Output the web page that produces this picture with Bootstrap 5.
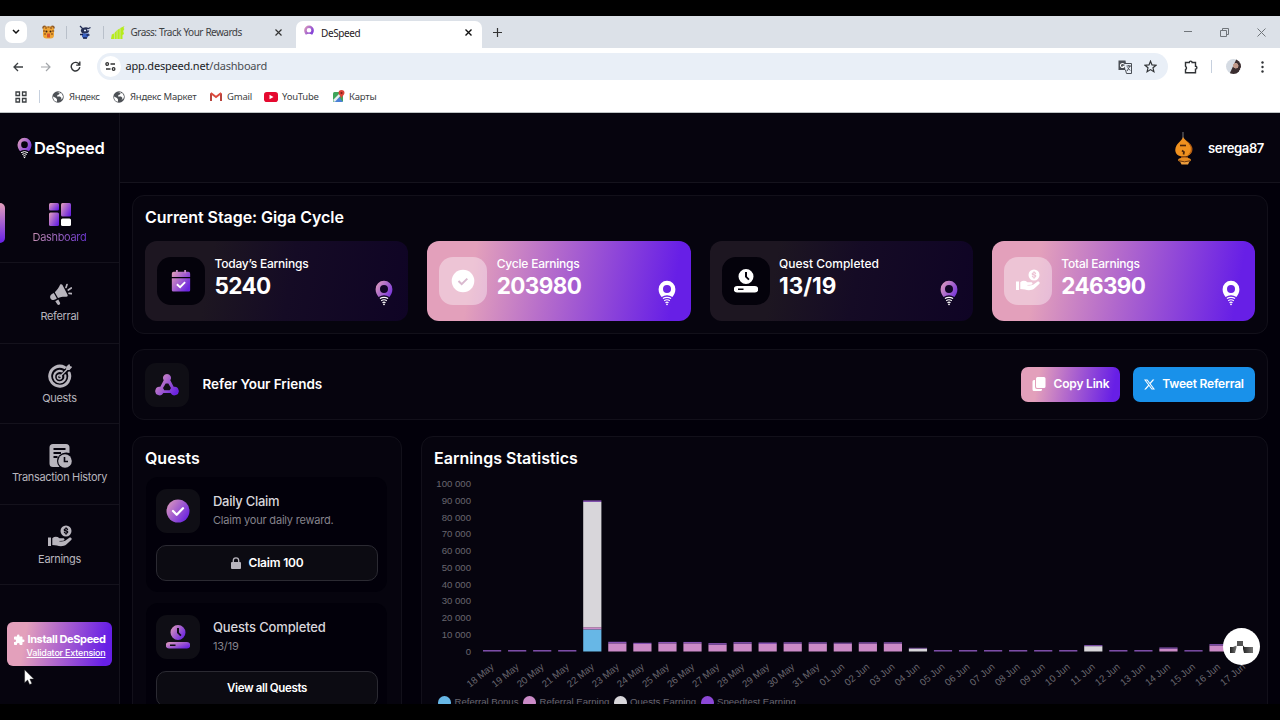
<!DOCTYPE html>
<html lang="en">
<head>
<meta charset="utf-8">
<title>DeSpeed</title>
<link href="https://cdn.jsdelivr.net/npm/bootstrap@5.3.0/dist/css/bootstrap.min.css" rel="stylesheet">
<style>
:root{--grad:linear-gradient(100deg,#e3a0bb 18%,#b56ccb 46%,#671fe6 92%)}
body{width:1280px;height:720px;overflow:hidden;background:#000;font-family:Inter,"Liberation Sans",sans-serif;font-size:12px;line-height:16px;color:#fff}
svg{display:block;flex:none}
span,a,h1,h2{white-space:nowrap}
.frame{height:688px;margin-top:16px;overflow:hidden;position:relative}
/* browser chrome */
.chrome{height:97px;background:#fff;color:#3c4043;font-family:"Noto Sans",sans-serif;font-size:10px;border-bottom:1px solid #bfc5c6}
.tabstrip{height:32px;background:#dce1e8;display:grid;grid-template-columns:32px 32px 4px 34px 4px 24px 136px 24px 6px 186px 30px 1fr 36px 37px 37px;align-items:center}
.tabstrip>*{justify-self:center}
.tabsearch{width:22px;height:22px;background:#fff;border-radius:7px}
.vline{width:1px;height:13px;background:#b9c0ca}
.tabnow{width:186px;height:27px;align-self:end;background:#fff;border-radius:7px 7px 0 0;color:#1f2023;padding:0 8px 4px 7px}
.toolbar{height:37px;display:grid;grid-template-columns:28px 28px 30px 1fr 44px 44px 12px;padding-left:4px;padding-right:12px;align-items:center}
.toolbar>*{justify-self:center}
.omni{justify-self:stretch!important;margin-left:7px;height:27px;border-radius:14px;background:#e9eff7;font-size:11px;letter-spacing:-.2px;color:#4a4d52;padding:0 11px 0 3px}
.omni b{font-weight:400;color:#202124}
.tune{width:21px;height:21px;border-radius:50%;background:#fff}
.marks{height:23px;display:grid;grid-template-columns:39px 13px 17px 44px 17px 80px 17px 37px 18px 50px 17px 1fr;align-items:center;font-size:9.5px}
.ph{width:15px;height:15px;border-radius:50%;background:radial-gradient(circle at 65% 45%,#c0998a 0 2.500px,transparent 3px),linear-gradient(115deg,#d5dbe3 45%,#3a2d2f 50% 85%,#b9b5bb 86%)}
/* application */
.app{height:591px;background:#02000a}
.side{width:120px;background:#06040e;border-right:1px solid #15131d}
.brandrow{height:70px;padding:0 0 0 17px}
.brandrow span{font-weight:600;font-size:16.500px;letter-spacing:-.3px}
.sitem{height:80.5px;padding-top:20px;border-bottom:1px solid #14121c;color:#b8b5bd;font-size:11px;letter-spacing:-.32px}
.sitem span{margin-top:2px}
.sitem.on{position:relative;height:80px}
.sitem.on:before{content:"";position:absolute;left:0;top:20px;width:5px;height:40px;border-radius:0 5px 5px 0;background:linear-gradient(#e3a0bb,#671fe6)}
.sitem.on span{background:linear-gradient(95deg,#c791b4,#6b35cf);-webkit-background-clip:text;background-clip:text;color:transparent}
.install{width:105px;height:44px;margin:37px 0 0 7px;border-radius:6px;background:var(--grad);font-size:11px;line-height:13px;padding:4px 0 0}
.install .l1{font-weight:700;letter-spacing:-.38px}
.install .l2{font-size:9px;font-weight:500;text-decoration:underline;letter-spacing:-.2px}
.topbar{height:70px;background:#06040e;border-bottom:1px solid #15131d;padding-right:16px}
.topbar span{font-weight:600;font-size:13px;width:56px;letter-spacing:-.35px}
.content{padding:12px 12px 0}
.panel{background:#06040e;border:1px solid #12101a;border-radius:12px;padding:0 12px}
h2{font-size:16px;font-weight:600;line-height:20px;margin:0}
.stats{display:grid;grid-template-columns:repeat(4,1fr);gap:19px}
.stat{height:80px;border-radius:12px;background:linear-gradient(100deg,#1d1621 25%,#150b25 55%,#0f0425);padding:0 12px}
.stat.hot{background:var(--grad)}
.ibox{width:48px;height:48px;border-radius:14px;background:#04020b;flex:none}
.hot .ibox{background:rgba(255,255,255,.38)}
.dim{width:44px;height:44px;background:#0f0e15;border-radius:11px}
.statcopy{margin:-7px auto 0 9.500px}
.stat .lab{font-size:12px;font-weight:500;letter-spacing:-.22px}
.stat .num{font-size:22.5px;font-weight:700;line-height:28px;letter-spacing:-.65px}
.cta{height:35px;border-radius:7px;font-size:12px;font-weight:600;color:#fff;border:0;padding:0 0 1px;letter-spacing:-.2px}
.quest{background:#02000a;border-radius:12px;height:115px;padding:12px 10px 0;margin:0 2px 11px 1px}
.qbtn{height:36px;width:222px;border-radius:10px;border:1px solid #2b2a32;background:#0c0b12;color:#fff;font-weight:600;font-size:12px;letter-spacing:-.2px;margin-top:12px;padding:0}
.qt{font-size:13px;color:#d8d6dc;font-weight:500;line-height:18px;letter-spacing:-.15px}
.qs{font-size:11px;color:#85838c;line-height:18px;letter-spacing:-.2px;margin-top:1px}
.chart text{font-family:"Liberation Sans",sans-serif;font-size:9.6px;fill:#69676f}
.chat{position:absolute;left:1223px;top:612px;width:37px;height:37px;border-radius:50%;background:#fff}
.pointer{position:absolute;left:24px;top:653px}
</style>
</head>
<body>
<svg width="0" height="0" class="position-absolute">
<defs>
<linearGradient id="g" x1="0" y1="0" x2="1" y2=".7"><stop offset="0" stop-color="#e3a0bb"/><stop offset="1" stop-color="#6b24e0"/></linearGradient>
<linearGradient id="pg" gradientUnits="userSpaceOnUse" x1="1" y1="3" x2="18" y2="14"><stop offset="0" stop-color="#dc9cbc"/><stop offset="1" stop-color="#7431dc"/></linearGradient>
<symbol id="pin" viewBox="0 0 18 26"><path fill-rule="evenodd" d="M9 .8a8.400 8.400 0 0 1 8.400 8.400c0 3-1.300 5.500-3 7.800a10 10 0 0 0-10.800 0C1.900 14.700.6 12.200.6 9.200A8.400 8.400 0 0 1 9 .8ZM9 5a4 4 0 1 0 0 8 4 4 0 0 0 0-8Z"/><g fill="none" stroke="#fff" stroke-width="1.200"><path d="M4.900 18.600q4.100-2.600 8.200 0M6.200 20.700q2.800-1.900 5.600 0M7.500 22.700q1.500-1.100 3 0"/></g><circle cx="9" cy="24.300" r=".9" fill="#fff"/></symbol>
<symbol id="hand" viewBox="0 0 24 24"><path d="M0 12.500h3v8.500H0zM4.300 13.200c2.200-1.900 4.800-1.900 7.200 0h3.600c1.800 0 1.900 2.300.1 2.500l-4.400.3c1.600.8 4.400.7 6.300-.3l3.900-2.700c1.700-1.200 3.500.6 2.200 2l-4.600 4.300c-1.600 1.400-3.600 1.900-5.700 1.900-3 0-4.900-1.200-8.600-1.200z"/><path fill-rule="evenodd" d="M18 .5a5.500 5.500 0 1 1 0 11 5.500 5.500 0 0 1 0-11Zm-.5 1.700v1c-2.500.4-2.300 2.900 0 3.300 1.500.3 1.500 1.100.5 1.100-.8 0-1-.3-1.100-.8h-1.200c.1 1.100.8 1.700 1.800 1.900v1h1.100v-1c2.400-.4 2.300-3-.1-3.500-1.400-.3-1.200-1-.4-1 .6 0 .8.300.9.700h1.200c-.1-1-.7-1.600-1.600-1.800V2.200Z"/></symbol>
<symbol id="clockbar" viewBox="0 0 24 24"><path fill-rule="evenodd" d="M12 0a7.500 7.500 0 1 1 0 15 7.500 7.500 0 0 1 0-15Zm-1 3v5l3.300 3.300 1.300-1.300-2.600-2.600V3Z"/><path fill-rule="evenodd" d="M3 17h18a3 3 0 0 1 0 6.500H3A3 3 0 0 1 3 17Zm1 2.500v1.600h5.500v-1.600Z"/></symbol>
<symbol id="puz" viewBox="0 0 24 24"><path d="M20.500 11H19V7c0-1.100-.9-2-2-2h-4V3.500a2.500 2.500 0 0 0-5 0V5H4c-1.100 0-2 .9-2 2v3.800h1.500a2.700 2.700 0 0 1 0 5.400H2V20c0 1.100.9 2 2 2h3.800v-1.500a2.700 2.700 0 0 1 5.400 0V22H17c1.100 0 2-.9 2-2v-4h1.500a2.500 2.500 0 0 0 0-5z"/></symbol>
<symbol id="globe" viewBox="0 0 12 12"><circle cx="6" cy="6" r="5.700" fill="#4d5156"/><path d="M1 5.500 4 7l1 1.500v2.200C2.500 10.500 1 8.500 1 5.500ZM5 1.300h3L7 3.500 5.500 4 5 5.500h3L9.500 7l-1 2 2-1.500.5-2-1.200-3Z" fill="#fff"/></symbol>
</defs>
</svg>

<div class="frame">
<header class="chrome">
 <div class="tabstrip">
  <div class="tabsearch d-flex align-items-center justify-content-center"><svg width="8" height="6" viewBox="0 0 8 6" fill="none" stroke="#111" stroke-width="1.500"><path d="m1 1 3 3 3-3"/></svg></div>
  <svg width="13" height="14" viewBox="0 0 13 14"><circle cx="2.500" cy="2.600" r="2.200" fill="#8d5a2c"/><circle cx="10.500" cy="2.600" r="2.200" fill="#8d5a2c"/><rect x="1" y="1.500" width="11" height="12" rx="3.500" fill="#eda334"/><path d="M3 3h2M8 3h2M5.500 2h2M1 6h2.200M10 6h2.200M2 9h2M9 9h2" stroke="#7b4319" stroke-width="1.200"/><circle cx="4.500" cy="6.500" r="1" fill="#402313"/><circle cx="8.500" cy="6.500" r="1" fill="#402313"/><path d="M5 8.500h3v4H5z" fill="#d9542b"/></svg>
  <i class="vline"></i>
  <svg width="12" height="14" viewBox="0 0 12 14"><path d="m1 1 3 3M8.500 4l3-1.500" stroke="#202b55" stroke-width="1.200"/><ellipse cx="6" cy="5.500" rx="4.200" ry="3" fill="#263056" transform="rotate(-12 6 5.500)"/><path d="M5 5.500h2M8.300 4.800h1.500" stroke="#dfe9ff" stroke-width="1.400"/><path d="M3 8.500h7L9 12l-2 1.500H5L3 12Z" fill="#3a62c4"/><path d="M1 9.500h3M7.500 10h3M4 13h4" stroke="#18224a" stroke-width="1.400"/></svg>
  <i class="vline" style="margin-left:-1px"></i>
  <svg width="14" height="13" viewBox="0 0 14 13"><path d="M0 13 .8 8.500 3 7.500V13Zm3.500 0V7l2.300-2.700V13ZM6.300 13V4l2.500-1.500V13ZM9.300 13V2l4.200-2-1 2 .9 1-1.200 2L13 8l-1.500 1V13Z" fill="#b6ec1c"/></svg>
  <span style="justify-self:start;margin-left:.5px;letter-spacing:-.54px;word-spacing:.5px">Grass: Track Your Rewards</span>
  <svg width="7" height="7" viewBox="0 0 7 7" stroke="#333" stroke-width="1.200"><path d="m.5.5 6 6m0-6-6 6"/></svg>
  <i></i>
  <div class="tabnow d-flex align-items-center"><svg width="12" height="15" viewBox="0 0 18 26" fill="url(#pg)"><use href="#pin"/></svg><span class="me-auto" style="margin-left:6px;letter-spacing:-.4px">DeSpeed</span><svg width="7" height="7" viewBox="0 0 7 7" stroke="#111" stroke-width="1.400" style="margin-right:2px"><path d="m.5.5 6 6m0-6-6 6"/></svg></div>
  <svg width="9" height="9" viewBox="0 0 9 9" stroke="#333" stroke-width="1.200"><path d="M4.500 0v9M0 4.500h9"/></svg>
  <i></i>
  <svg width="8" height="8" viewBox="0 0 8 8" stroke="#70757a"><path d="M0 3.500h8"/></svg>
  <svg width="9" height="9" viewBox="0 0 9 9" stroke="#70757a" fill="none"><path d="M.5 2.500h6v6h-6zM2.500 2.500v-2h6v6h-2"/></svg>
  <svg width="9" height="9" viewBox="0 0 9 9" stroke="#70757a"><path d="m.5.500 8 8m0-8-8 8"/></svg>
 </div>
 <div class="toolbar">
  <svg width="10" height="10" viewBox="0 0 10 10" fill="none" stroke="#3c4043" stroke-width="1.300"><path d="M10 5H1M5 1 1 5l4 4"/></svg>
  <svg width="10" height="10" viewBox="0 0 10 10" fill="none" stroke="#a3a6aa" stroke-width="1.200"><path d="M0 5h9M5 1l4 4-4 4"/></svg>
  <svg width="11" height="11" viewBox="0 0 11 11" fill="none" stroke="#303336" stroke-width="1.400"><path d="M9.300 3.600A4.300 4.300 0 1 0 9.800 6.200M9.800.5v3.600H6.200"/></svg>
  <div class="omni d-flex align-items-center"><div class="tune d-flex align-items-center justify-content-center"><svg width="11" height="9" viewBox="0 0 11 9" fill="none" stroke="#333" stroke-width="1.300"><circle cx="2.200" cy="2" r="1.300"/><path d="M5.500 2H10M1 7h4.500"/><circle cx="8.600" cy="7" r="1.300"/></svg></div>
   <span class="me-auto" style="margin-left:4.500px;padding-bottom:1px"><b>app.despeed.net</b>/dashboard</span>
   <svg width="14" height="14" viewBox="0 0 14 14" style="margin-right:12px"><path d="M.5.500h7l1.500 9.500H.5Z" fill="#4a4e55"/><path d="M6 3.500h7.500v10H8.500L7.500 10" fill="#e9eff7" stroke="#4a4e55"/><path d="M6 4.200a2 2 0 1 0 .3 2H4.500" fill="none" stroke="#fff" stroke-width="1.100"/><path d="M8.500 6H13M10.800 5v1M9 11l3-5M9.500 7.500l2.700 3" stroke="#4a4e55" fill="none"/></svg>
   <svg width="13" height="13" viewBox="0 0 13 13" fill="none" stroke="#303336" stroke-width="1.200"><path d="m6.500 1.200 1.500 3.700 4 .3-3 2.600.9 3.900-3.400-2.100-3.400 2.100.9-3.900-3-2.600 4-.3Z"/></svg></div>
  <svg width="14" height="14" viewBox="0 0 14 14" fill="none" stroke="#303336" stroke-width="1.400" style="margin-left:2px"><path d="M1.500 2.500h3.800a1.400 1.400 0 0 1 2.800 0h3.400v3.800a1.400 1.400 0 0 1 0 2.800v3.700h-10V9.600q2-1.600 0-3.400Z"/></svg>
  <div class="d-flex align-items-center"><i class="vline" style="margin-left:-16px;margin-right:14px;background:#c6d0de"></i><i class="ph"></i></div>
  <svg width="3" height="12" viewBox="0 0 3 12" fill="#303336"><circle cx="1.500" cy="1.500" r="1.200"/><circle cx="1.500" cy="6" r="1.200"/><circle cx="1.500" cy="10.500" r="1.200"/></svg>
 </div>
 <div class="marks">
  <svg width="12" height="12" viewBox="0 0 12 12" fill="none" stroke="#3c4043" stroke-width="1.300" style="margin-left:15px"><path d="M1 1h3.500v3.500H1zM7.500 1H11v3.500H7.500zM1 7.500h3.500V11H1zM7.500 7.500H11V11H7.500z"/></svg>
  <i class="vline" style="background:#c6d0de"></i>
  <svg width="12" height="12"><use href="#globe"/></svg><span style="letter-spacing:-.3px">Яндекс</span>
  <svg width="12" height="12"><use href="#globe"/></svg><span style="letter-spacing:-.2px">Яндекс Маркет</span>
  <svg width="12" height="9" viewBox="0 0 12 9" fill="none" stroke-width="2"><path d="M1 9V1.500" stroke="#b8453e"/><path d="M11 9V1.500" stroke="#b8453e"/><path d="m.8 1 5.200 4 5.200-4" stroke="#dd4b3e"/></svg><span style="letter-spacing:-.2px">Gmail</span>
  <svg width="14" height="10" viewBox="0 0 14 10"><rect width="14" height="10" rx="2.800" fill="#e5092f"/><path d="m5.500 2.800 4 2.200-4 2.200Z" fill="#fff"/></svg><span style="letter-spacing:-.25px">YouTube</span>
  <svg width="12" height="13" viewBox="0 0 12 13" style="margin-left:1px"><rect y="2" width="10" height="10" rx="1.500" fill="#3fa55b"/><path d="m1 12 5-5 4 5Z" fill="#4a80d6"/><path d="m0 10 8-8 1.500 1.500L1.800 12Z" fill="#e9edf2"/><path d="M8.500 0a3 3 0 0 1 3 3c0 2-2.500 3-3 5.500C8 6 5.500 5 5.500 3a3 3 0 0 1 3-3Z" fill="#dc4437"/><circle cx="8.500" cy="3" r="1" fill="#7c1d17"/></svg><span style="letter-spacing:-.15px">Карты</span>
 </div>
</header>

<div class="app d-flex">
 <aside class="side d-flex flex-column flex-shrink-0">
  <div class="brandrow d-flex align-items-center"><svg width="15" height="22" fill="url(#pg)" viewBox="0 0 18 26"><use href="#pin"/></svg><span style="margin-left:2px">DeSpeed</span></div>
  <a class="sitem on d-flex flex-column align-items-center text-decoration-none"><svg width="24" height="24" viewBox="0 0 24 24" fill="url(#g)"><rect x="1" y="0" width="10" height="7.500" rx="1.500"/><rect x="1" y="9.500" width="10" height="13.500" rx="1.500"/><rect x="13" y="0" width="10" height="13.500" rx="1.500"/><rect x="13" y="15.500" width="10" height="7.500" rx="1.500" fill="#fff"/></svg><span>Dashboard</span></a>
  <a class="sitem d-flex flex-column align-items-center text-decoration-none"><svg width="24" height="24" viewBox="0 0 24 24" fill="#b8b5bd"><path d="M12.200 1.600c.8-.8 1.800-.5 2.300.5l5 9.600c.6 1.100 0 2-1.200 2-3.100-.2-5.700.1-8.300 1.300L6.800 9.200c2.300-1.900 4-4.500 5.400-7.600ZM5.800 10l3.100 5.600-1.700 1c-1.700.9-3.700.5-4.700-1.100-.9-1.600-.3-3.600 1.400-4.600ZM7.300 18.200l3-1.600 1.700 3.200c.9 1.700-1.700 3.100-2.700 1.500Z"/><path d="m18 4.500 1-3M20.300 7l3-2M21 10.300l2.700.3" stroke="#b8b5bd" stroke-width="1.700" stroke-linecap="round"/></svg><span style="margin-top:1px">Referral</span></a>
  <a class="sitem d-flex flex-column align-items-center text-decoration-none"><svg width="24" height="24" viewBox="0 0 24 24" fill="none" stroke="#b8b5bd" stroke-linecap="round"><path d="M16.500 3.400A10 10 0 1 0 21.200 9" stroke-width="3"/><path d="M13.800 7.300a5.700 5.700 0 1 0 3.500 4" stroke-width="2.200"/><circle cx="11.500" cy="13" r="2" stroke-width="1.500"/><path d="m12 12.500 8-8" stroke-width="1.500"/><path d="M18.800 5.300V3l2.200-2 .6 1.600 1.600.6-2 2.200Z" fill="#b8b5bd" stroke-width="1.300"/></svg><span>Quests</span></a>
  <a class="sitem d-flex flex-column align-items-center text-decoration-none"><svg width="24" height="24" viewBox="0 0 24 24" fill="#b8b5bd"><path d="M5 0h13a3.500 3.500 0 0 1 3.500 3.500V9a8 8 0 0 0-9 12.500L14 23H5a3.500 3.500 0 0 1-3.500-3.500v-16A3.500 3.500 0 0 1 5 0Z"/><path d="M5.500 5h12M5.500 9h7.500M5.500 13h4" stroke="#06040e" stroke-width="1.800"/><circle cx="17" cy="17" r="8" fill="#06040e"/><circle cx="17" cy="17" r="6.800"/><path d="M16.500 13v4.500H20" fill="none" stroke="#06040e" stroke-width="1.600"/></svg><span style="margin-top:1px">Transaction History</span></a>
  <a class="sitem d-flex flex-column align-items-center text-decoration-none"><svg width="24" height="24" fill="#b8b5bd"><use href="#hand"/></svg><span>Earnings</span></a>
  <div class="install d-flex align-items-center justify-content-center"><div class="d-flex flex-column align-items-end"><div class="d-flex align-items-center"><svg width="12" height="12" fill="#fff" style="margin-right:2px"><use href="#puz"/></svg><span class="l1">Install DeSpeed</span></div><span class="l2">Validator Extension</span></div></div>
 </aside>
 <div class="flex-grow-1">
  <div class="topbar d-flex align-items-center justify-content-end">
   <svg width="18" height="34" viewBox="0 0 18 34" style="margin:2px 15px 0 0"><path d="M8 0v8" stroke="#777"/><path d="M8 5c1.500 3 5.500 5 7.500 8.500 3 5.500.5 11-7 11S-1.500 19 1.500 13.500C3.500 10 7 8.500 8 5Z" fill="#ef911f"/><path d="M11 8c5 4 7 11 2 15 3-.5 4.500-3 4.500-6S14.500 10.500 11 8Z" fill="#b35c12"/><path d="M5 13.500h6" stroke="#4b250a" stroke-width="1.600"/><path d="m7 18.500 2 1.500-.5 2.500" stroke="#4b250a" stroke-width="1.700" fill="none"/><path d="M6 24.500h7v3H6z" fill="#9c4f10"/><ellipse cx="9.500" cy="28" rx="6.500" ry="2.500" fill="#e58a21"/><path d="M5 29.500h9.500l-1.500 3H6.500Z" fill="#ef9f3e"/><path d="M4 28.800q5.500 2 11 0" stroke="#6b370d" fill="none"/></svg>
   <span>serega87</span>
  </div>
  <div class="content">
   <section class="panel" style="height:139px;padding-top:11px">
    <h2 style="margin-bottom:14px;letter-spacing:-.06px">Current Stage: Giga Cycle</h2>
    <div class="stats">
     <div class="stat d-flex align-items-center"><div class="ibox d-flex align-items-center justify-content-center"><svg width="22" height="24" viewBox="0 0 24 24"><path d="M2 4a2 2 0 0 1 2-2h16a2 2 0 0 1 2 2v3.500H2ZM2 9h20v13a1.500 1.500 0 0 1-1.500 1.500h-17A1.500 1.500 0 0 1 2 22Z" fill="url(#g)"/><path d="M7.500 0v3.500M16.500 0v3.500" stroke="#c58ac4" stroke-width="2"/><path d="m7.500 15.500 3.500 3.300 5.500-5.600" stroke="#fff" stroke-width="2" fill="none"/></svg></div><div class="statcopy d-flex flex-column"><span class="lab">Today’s Earnings</span><span class="num">5240</span></div><svg width="18" height="26" viewBox="0 0 18 26" fill="url(#pg)" style="margin:24px 3px 0 0"><use href="#pin"/></svg></div>
     <div class="stat hot d-flex align-items-center"><div class="ibox d-flex align-items-center justify-content-center"><svg width="24" height="24" viewBox="0 0 24 24"><circle cx="12" cy="12" r="11.300" fill="#fff"/><path d="m7.500 12 3.200 3.200 5.600-5.600" fill="none" stroke="#d9b9cf" stroke-width="2"/></svg></div><div class="statcopy d-flex flex-column"><span class="lab">Cycle Earnings</span><span class="num">203980</span></div><svg width="18" height="26" fill="#fff" style="margin:24px 3px 0 0"><use href="#pin"/></svg></div>
     <div class="stat d-flex align-items-center"><div class="ibox d-flex align-items-center justify-content-center"><svg width="24" height="24" fill="#fff"><use href="#clockbar"/></svg></div><div class="statcopy d-flex flex-column"><span class="lab" style="letter-spacing:0">Quest Completed</span><span class="num" style="letter-spacing:0">13/19</span></div><svg width="18" height="26" viewBox="0 0 18 26" fill="url(#pg)" style="margin:24px 3px 0 0"><use href="#pin"/></svg></div>
     <div class="stat hot d-flex align-items-center"><div class="ibox d-flex align-items-center justify-content-center"><svg width="24" height="24" fill="#fff"><use href="#hand"/></svg></div><div class="statcopy d-flex flex-column"><span class="lab">Total Earnings</span><span class="num">246390</span></div><svg width="18" height="26" fill="#fff" style="margin:24px 3px 0 0"><use href="#pin"/></svg></div>
    </div>
   </section>
   <section class="panel d-flex align-items-center" style="height:71px;margin-top:15px">
    <div class="ibox dim d-flex align-items-center justify-content-center"><svg width="24" height="24" viewBox="0 0 24 24" fill="url(#g)"><path fill-rule="evenodd" d="M12 1a4 4 0 0 1 3.300 6.200l3.400 6.600a4.300 4.300 0 1 1-3.100 6.200H8.400a4.300 4.300 0 1 1-3.100-6.200l3.400-6.600A4 4 0 0 1 12 1Zm-1.300 9.500-2.700 4.500 1.300 2.200h5.400l1.300-2.200-2.700-4.500Z"/></svg></div>
    <h2 class="me-auto" style="margin-left:13.500px;margin-top:-1px;font-size:13.500px;letter-spacing:-.05px">Refer Your Friends</h2>
    <button class="btn cta d-flex align-items-center justify-content-center" style="width:99px;background:var(--grad);margin-right:13px"><svg width="14" height="14" viewBox="0 0 14 14" fill="#fff" style="margin-right:8px"><path d="M5.500 0H12a1.500 1.500 0 0 1 1.500 1.500v8A1.500 1.500 0 0 1 12 11H5.500A1.500 1.500 0 0 1 4 9.500v-8A1.500 1.500 0 0 1 5.500 0Z"/><path d="M3 3H2A1.500 1.500 0 0 0 .5 4.500v8A1.500 1.500 0 0 0 2 14h6.500a1.500 1.500 0 0 0 1.500-1.500V12H5a2 2 0 0 1-2-2Z"/></svg><span>Copy Link</span></button>
    <button class="btn cta d-flex align-items-center justify-content-center" style="width:122px;background:#1991ea"><svg width="11" height="11" viewBox="0 0 16 16" fill="#fff" style="margin-right:7px;margin-top:1px"><path d="M12.600.75h2.454l-5.360 6.142L16 15.250h-4.937l-3.867-5.070-4.425 5.070H.316l5.733-6.570L0 .75h5.063l3.495 4.633L12.601.75Zm-.86 13.028h1.360L4.323 2.145H2.865z"/></svg><span>Tweet Referral</span></button>
   </section>
   <div class="d-flex" style="gap:19px;margin-top:16px">
    <section class="panel flex-shrink-0" style="width:270px;height:320px;padding-top:11px">
     <h2 style="margin-bottom:9px">Quests</h2>
     <div class="quest"><div class="d-flex"><div class="ibox dim d-flex align-items-center justify-content-center"><svg width="24" height="24" viewBox="0 0 24 24"><circle cx="12" cy="12" r="11.500" fill="url(#g)"/><path d="m7 12 3.700 3.700 6.300-6.400" fill="none" stroke="#fff" stroke-width="2.300" stroke-linecap="round" stroke-linejoin="round"/></svg></div><div class="d-flex flex-column" style="margin:3px 0 0 13px"><span class="qt" style="letter-spacing:-.28px">Daily Claim</span><span class="qs">Claim your daily reward.</span></div></div>
      <button class="btn qbtn d-flex align-items-center justify-content-center"><svg width="10" height="12" viewBox="0 0 10 12" style="margin-right:8px"><path d="M2.300 5.500V3.500a2.700 2.700 0 0 1 5.400 0v2" fill="none" stroke="#b8b5bd" stroke-width="1.300"/><rect y="5" width="10" height="7" rx="1" fill="#b8b5bd"/></svg><span>Claim 100</span></button></div>
     <div class="quest"><div class="d-flex"><div class="ibox dim d-flex align-items-center justify-content-center"><svg width="24" height="24" fill="url(#g)"><use href="#clockbar"/></svg></div><div class="d-flex flex-column" style="margin:3px 0 0 13px"><span class="qt">Quests Completed</span><span class="qs">13/19</span></div></div>
      <button class="btn qbtn d-flex align-items-center justify-content-center"><span style="font-size:11.500px;letter-spacing:-.36px">View all Quests</span></button></div>
    </section>
    <section class="panel flex-grow-1" style="height:320px;padding:11px 0 0 12px">
     <h2>Earnings Statistics</h2>
     <svg class="chart" id="chart" width="832" height="236" viewBox="434 468 832 236"></svg>
    </section>
   </div>
  </div>
 </div>
</div>
<div class="chat d-flex align-items-center justify-content-center"><svg width="23" height="14" viewBox="0 0 23 14"><defs><linearGradient id="k"><stop stop-color="#222"/><stop offset="1" stop-color="#777"/></linearGradient></defs><path d="M7 1h6v5H7z" fill="#555"/><path d="M0 7h3l3.500-1.500v2L5 13H0Z" fill="url(#k)"/><path d="M13 5.500 14.500 7H23v6h-9l-1-4Z" fill="url(#k)"/></svg></div>
<svg class="pointer" width="12" height="18" viewBox="0 0 12 18"><path d="M.6.800v13l3-2.800 2 4.600 2.300-1-2-4.500h4Z" fill="#fff" stroke="#222" stroke-width=".5"/></svg>
</div>
<script src="https://cdn.jsdelivr.net/npm/bootstrap@5.3.0/dist/js/bootstrap.bundle.min.js"></script>
<script>
// Daily earnings: [referral bonus, referral earning, quests earning, speedtest earning]
const tiny=[0,0,0,500], B=651.5, K=16.75/10000;
const days=[tiny,tiny,tiny,tiny,[13200,1300,74800,900],[0,4900,0,900],[0,4500,0,700],[0,4900,0,800],[0,4900,0,800],[0,4100,0,900],[0,4700,0,900],[0,4500,0,900],[0,4700,0,800],[0,4700,0,800],[0,4700,0,600],[0,4800,0,700],[0,4800,0,700],[0,0,1800,400],tiny,tiny,tiny,tiny,tiny,tiny,[0,0,3200,600],tiny,tiny,[0,1700,0,700],[0,0,0,800],[0,3600,0,800],tiny];
const color=["#67b7e6","#cb8bc7","#d8d6da","#8a56b8"];
let s="";
for(let i=0;i<=10;i++){const t=i===0?"0":i*10+" 000";s+=`<text x="471" y="${654.5-i*16.75}" text-anchor="end">${t}</text>`}
days.forEach((d,i)=>{
 const x=483+i*25.05;let y=B;
 d.forEach((v,j)=>{const h=v===500?1.4:v*K;if(v){y-=h;s+=`<rect x="${x}" y="${y}" width="18.200" height="${h}" fill="${color[j]}"/>`}});
 const n=i<14?(18+i)+" May":String(i-13).padStart(2,"0")+" Jun";
 s+=`<text transform="translate(${x+11.5} 668) rotate(-39)" text-anchor="end">${n}</text>`;
});
[["Referral Bonus",444.5,454.5,"#67b7e6"],["Referral Earning",529.5,539.5,"#cb8bc7"],["Quests Earning",620.5,630,"#d8d6da"],["Speedtest Earning",707.5,717,"#8c48d6"]].forEach(([t,c,x,f])=>{s+=`<circle cx="${c}" cy="702.500" r="6.500" fill="${f}"/><text x="${x}" y="705.300">${t}</text>`});
document.getElementById("chart").innerHTML=s;
</script>
</body>
</html>
